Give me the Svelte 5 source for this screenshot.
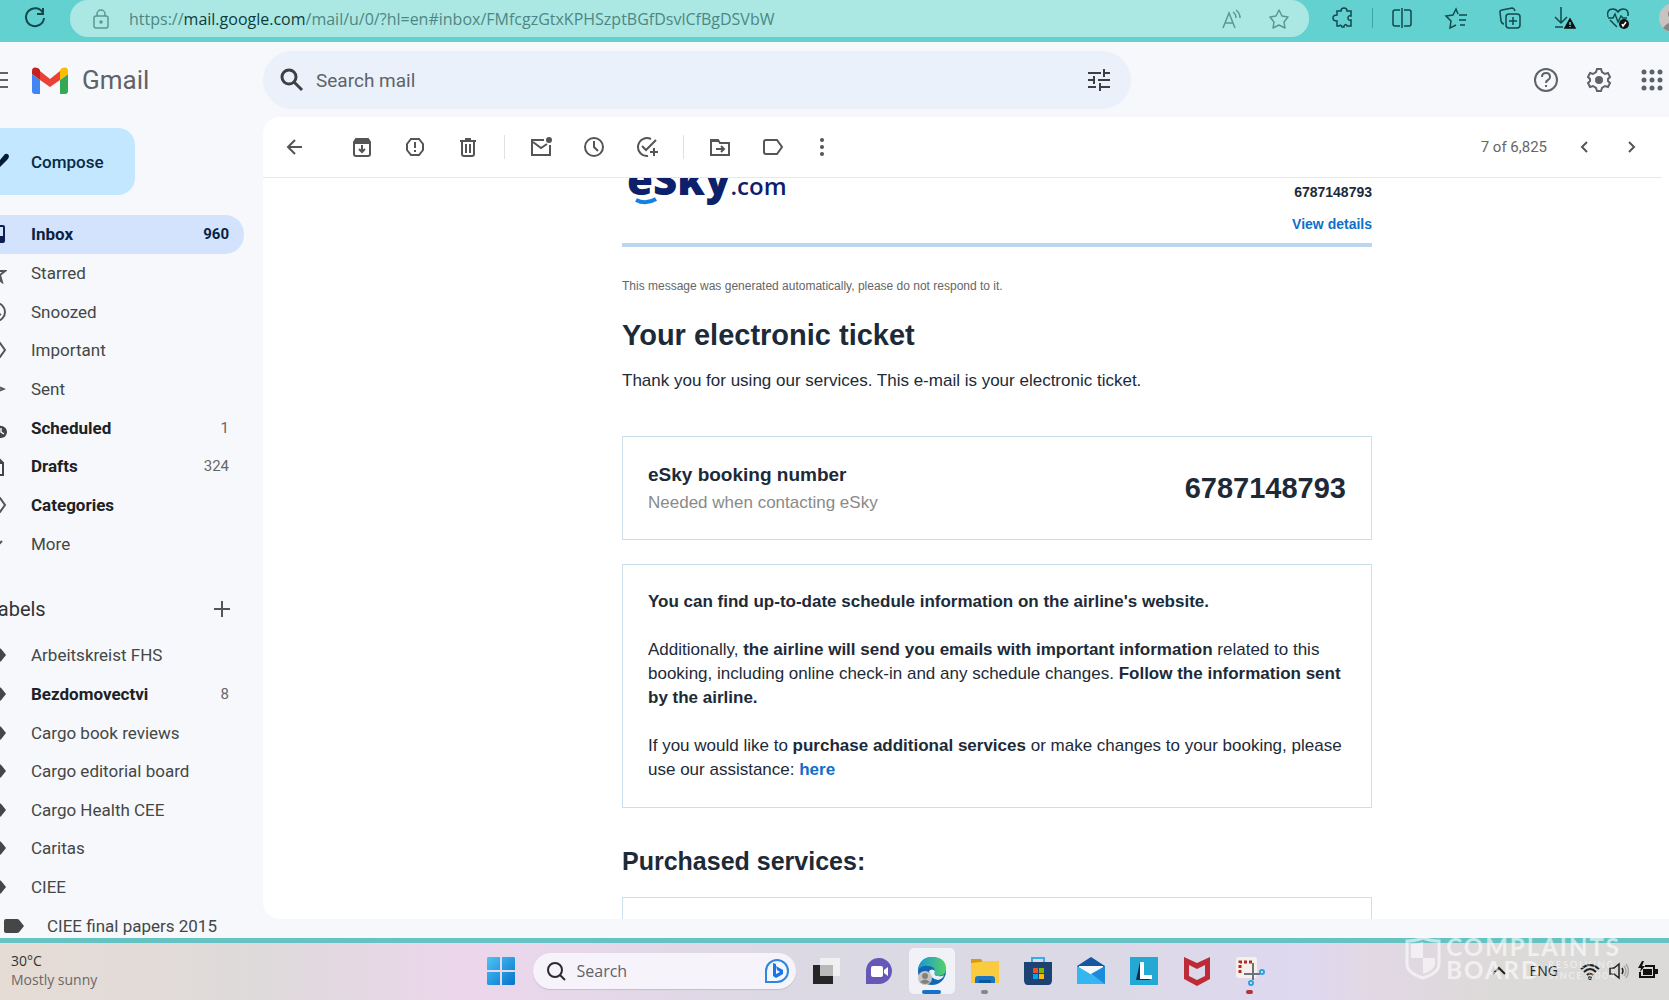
<script lang="ts">
	type Row = { name: string; icon?: string; count?: string; bold?: boolean; active?: boolean; nested?: boolean };

	const folders: Row[] = [
		{ name: 'Inbox', icon: 'inbox', count: '960', bold: true, active: true },
		{ name: 'Starred', icon: 'star' },
		{ name: 'Snoozed', icon: 'clock' },
		{ name: 'Important', icon: 'important' },
		{ name: 'Sent', icon: 'sent' },
		{ name: 'Scheduled', icon: 'scheduled', count: '1', bold: true },
		{ name: 'Drafts', icon: 'draft', count: '324', bold: true },
		{ name: 'Categories', icon: 'important', bold: true },
		{ name: 'More', icon: 'more' }
	];

	const labels: Row[] = [
		{ name: 'Arbeitskreist FHS' },
		{ name: 'Bezdomovectvi', count: '8', bold: true },
		{ name: 'Cargo book reviews' },
		{ name: 'Cargo editorial board' },
		{ name: 'Cargo Health CEE' },
		{ name: 'Caritas' },
		{ name: 'CIEE' },
		{ name: 'CIEE final papers 2015', nested: true }
	];

	let url = $state('/mail/u/0/?hl=en#inbox/FMfcgzGtxKPHSzptBGfDsvlCfBgDSVbW');
	let query = $state('');
	let taskQuery = $state('');
</script>

{#snippet rowIcon(name: string)}
	<svg class="row-icon" viewBox="0 0 22 22" aria-hidden="true">
		{#if name === 'inbox'}
			<path fill="#0b1f52" fill-rule="evenodd" d="M4 2h14q2 0 2 2v14q0 2-2 2H4q-2 0-2-2V4q0-2 2-2zm0 2v9h4c1 3 5 3 6 0h4V4z" />
		{:else if name === 'star'}
			<path fill="none" stroke="#555" stroke-width="2" d="m11 3 2 6h7l-5 4 2 7-6-4-6 4 2-7-5-4h7z" />
		{:else if name === 'clock'}
			<circle cx="11" cy="11" r="9" fill="none" stroke="#555" stroke-width="2" />
			<path fill="none" stroke="#555" stroke-width="2" d="M11 5v6l5 3" />
		{:else if name === 'important'}
			<path fill="none" stroke="#555" stroke-width="2" d="M2 4h13l5 7-5 7H2l4-7z" />
		{:else if name === 'sent'}
			<path fill="#555" fill-rule="evenodd" d="m1 3 20 8-20 8zm2 3v3l7 2-7 2v3l13-5z" />
		{:else if name === 'scheduled'}
			<path fill="none" stroke="#555" stroke-width="2" d="m2 4 16 7M2 4v14l8-3M2 11h7" />
			<circle cx="16" cy="15" r="6" fill="#444" />
			<path fill="none" stroke="#f6f8fc" stroke-width="1.5" d="M16 11v4l3 2" />
		{:else if name === 'draft'}
			<path fill="none" stroke="#444" stroke-width="2" d="M3 2h9l6 6v12H3zM12 2v6h6" />
		{:else if name === 'more'}
			<path fill="none" stroke="#555" stroke-width="2" d="m5 8 6 6 6-6" />
		{:else}
			<path fill="#444746" d="M3 4h11q2 0 3 2l4 5-4 5q-1 2-3 2H3q-2 0-2-2V6q0-2 2-2z" />
		{/if}
	</svg>
{/snippet}

{#snippet row(item: Row)}
	<a class="row" class:active={item.active} class:bold={item.bold} class:nested={item.nested} href="#{item.name}">
		{@render rowIcon(item.icon ?? 'label')}
		<span class="row-name">{item.name}</span>
		{#if item.count}<span class="count">{item.count}</span>{/if}
	</a>
{/snippet}

<div class="screen">
	<div class="browser-bar">
		<button class="reload" aria-label="Reload">
			<svg width="24" height="24" viewBox="0 0 24 24" fill="none" stroke="#12494c" stroke-width="2">
				<path d="M20 7A9 9 0 1 0 21 12M20 2v6h-6" />
			</svg>
		</button>
		<div class="address">
			<svg width="18" height="20" viewBox="0 0 18 20" fill="none" stroke="#5f9490" stroke-width="1.5">
				<rect x="2" y="7" width="14" height="12" rx="2" />
				<path d="M5 7V5a4 4 0 0 1 8 0v2" />
				<circle cx="9" cy="13" r="1" fill="#5f9490" />
			</svg>
			<span class="url"><span>https://</span><b>mail.google.com</b><input aria-label="Address" bind:value={url} /></span>
			<svg width="22" height="22" viewBox="0 0 22 22" fill="none" stroke="#5f9490" stroke-width="1.5">
				<path d="M3 20 9 5l6 15M5 15h8M13 4q3 2 3 6M16 2q4 3 4 8" />
			</svg>
			<svg width="22" height="22" viewBox="0 0 22 22" fill="none" stroke="#5f9490" stroke-width="1.5" stroke-linejoin="round">
				<path d="m11 2 3 6 6 1-4 5 1 6-6-3-6 3 1-6-4-5 6-1z" />
			</svg>
		</div>
		<div class="browser-tools">
			<button aria-label="Extensions">
				<svg viewBox="0 0 24 24"><path d="M6 5h4q0-3 3-3t3 3h4v5q-3-1-3 2t3 2v6h-4q-1-3-3 0v1h-2q-1-3-3-1H6v-5q-4 0-4-3t4-3z" /></svg>
			</button>
			<span class="bar-line"></span>
			<button aria-label="Split screen">
				<svg viewBox="0 0 24 24"><path d="M10 4H5q-2 0-2 2v12q0 2 2 2h5M14 4h5q2 0 2 2v12q0 2-2 2h-5M12 2v20" /></svg>
			</button>
			<button aria-label="Favorites">
				<svg viewBox="0 0 24 24"><path d="M14 8 12 3 9 9l-7 1 5 5-1 7 6-3M15 9h8M15 14h7M16 19h5" /></svg>
			</button>
			<button aria-label="Collections">
				<svg viewBox="0 0 24 24"><path d="M6 18q-2 0-3-3L2 6q0-2 2-2l10-2q2 0 3 3" /><rect x="8" y="8" width="14" height="14" rx="3" /><path d="M15 11v8M11 15h8" /></svg>
			</button>
			<button aria-label="Downloads">
				<svg viewBox="0 0 24 24"><path d="M9 1v16M3 11l6 6 6-6M3 21h8" /><path fill="#111" stroke="#111" d="m18 13 5 9H13z" /><path stroke="#62d1d0" d="M18 16v3M18 20v1" /></svg>
			</button>
			<button aria-label="Browser essentials">
				<svg viewBox="0 0 24 24"><path d="M2 11Q0 3 7 3q3 0 5 3 2-3 5-3 6 0 5 7M2 12h5l2-4 3 8 3-6 2 2h4M4 14l7 7" /><circle cx="18" cy="18" r="5" fill="#111" stroke="none" /><path stroke="#fff" d="m16 18 1 2 3-4" /></svg>
			</button>
		</div>
		<svg class="avatar" viewBox="0 0 30 30" aria-hidden="true">
			<circle cx="15" cy="15" r="15" fill="#c9c3c0" />
			<circle cx="15" cy="11" r="6" fill="#8b8584" />
			<path fill="#8b8584" d="M4 25q11-13 22 0-11 9-22 0z" />
		</svg>
	</div>

	<div class="mail">
		<header class="mail-head">
			<div class="brand">
				<svg width="8" height="18" viewBox="0 0 8 18" stroke="#5f6368" stroke-width="2"><path d="M0 2h8M0 9h8M0 16h8" /></svg>
				<svg class="gmail-mark" viewBox="0 0 36 27" aria-hidden="true">
					<path fill="#4285f4" d="M0 7v17q0 3 3 3h5V13z" />
					<path fill="#34a853" d="M36 7v17q0 3-3 3h-5V13z" />
					<path fill="#ea4335" d="m8 4 10 8 10-8v9l-10 7-10-7z" />
					<path fill="#c5221f" d="M0 4q0-5 6-3l2 2v10L0 7z" />
					<path fill="#fbbc04" d="M36 4q0-5-6-3l-2 2v10l8-6z" />
				</svg>
				<span class="gmail-name">Gmail</span>
			</div>
			<label class="search">
				<svg width="24" height="24" viewBox="0 0 24 24" fill="none" stroke="#3c4043" stroke-width="3"><circle cx="9" cy="9" r="7" /><path d="m14 14 8 8" /></svg>
				<input type="text" placeholder="Search mail" aria-label="Search mail" bind:value={query} />
				<svg width="24" height="24" viewBox="0 0 24 24" fill="none" stroke="#3c4043" stroke-width="2"><path d="M1 5h13M17 5h6M1 12h6M11 12h12M1 19h8M13 19h10M17 1v8M7 8v8M13 15v8" /></svg>
			</label>
			<div class="head-tools">
				<button aria-label="Support">
					<svg width="26" height="26" viewBox="0 0 26 26" fill="none" stroke="#5f6368" stroke-width="2"><circle cx="13" cy="13" r="11" /><path d="M9 10q0-4 4-4t4 4q0 2-2 3t-2 3M13 18v2" /></svg>
				</button>
				<button aria-label="Settings">
					<svg width="26" height="26" viewBox="0 0 26 26" fill="none" stroke="#5f6368" stroke-width="2"><path d="M11 2h4l1 3 3 2 3-1 2 4-2 2v2l2 2-2 4-3-1-3 2-1 3h-4l-1-3-3-2-3 1-2-4 2-2v-2l-2-2 2-4 3 1 3-2z" /><circle cx="13" cy="13" r="3" fill="#5f6368" /></svg>
				</button>
				<button aria-label="Google apps">
					<svg width="26" height="26" viewBox="0 0 26 26" fill="#5f6368">
						{#each [5, 13, 21] as cy}{#each [5, 13, 21] as cx}<circle {cx} {cy} r="2.5" />{/each}{/each}
					</svg>
				</button>
			</div>
		</header>

		<aside>
			<button class="compose">
				<svg width="9" height="20" viewBox="0 0 9 20"><path fill="#001d35" d="M0 8 5 2q3-1 4 2 0 2-2 4l-7 7z" /></svg>
				Compose
			</button>
			<nav class="rows folders">
				{#each folders as item}{@render row(item)}{/each}
			</nav>
			<div class="labels-head">
				<h2>Labels</h2>
				<button aria-label="Create new label">
					<svg width="16" height="16" viewBox="0 0 16 16" stroke="#555" stroke-width="2"><path d="M8 0v16M0 8h16" /></svg>
				</button>
			</div>
			<nav class="rows labels">
				{#each labels as item}{@render row(item)}{/each}
			</nav>
		</aside>

		<main>
			<div class="toolbar">
				<button class="back" aria-label="Back to inbox"><svg viewBox="0 0 22 22"><path d="M18 11H4M11 4l-7 7 7 7" /></svg></button>
				<button aria-label="Archive"><svg viewBox="0 0 22 22"><path d="M3 6v12q0 2 2 2h12q2 0 2-2V6l-2-3H5zM3 7h16M3 5h16M11 9v6M8 13l3 3 3-3" /></svg></button>
				<button aria-label="Report spam"><svg viewBox="0 0 22 22"><path d="M7 3h8l4 5v6l-4 5H7l-4-5V8zM11 6v6M11 14v2" /></svg></button>
				<button aria-label="Delete"><svg viewBox="0 0 22 22"><path d="M5 5v13q0 2 2 2h8q2 0 2-2V5M3 5h16M8 3h6M9 8v9M13 8v9" /></svg></button>
				<span class="split"></span>
				<button aria-label="Mark as unread"><svg viewBox="0 0 22 22"><path d="M14 4H2v15h18V9M3 6l8 6 6-4" /><circle cx="19" cy="4" r="2" fill="#555" /></svg></button>
				<button aria-label="Snooze"><svg viewBox="0 0 22 22"><circle cx="11" cy="11" r="9" /><path d="M11 5v6l4 4" /></svg></button>
				<button aria-label="Add to tasks"><svg viewBox="0 0 22 22"><path d="M15 3A9 9 0 1 0 12 20M6 10l4 4L20 4M18 12v8M14 16h8" /></svg></button>
				<span class="split"></span>
				<button aria-label="Move to"><svg viewBox="0 0 22 22"><path d="M2 4h7l2 3h9v12H2zM2 5h7M7 13h8M12 10l3 3-3 3" /></svg></button>
				<button aria-label="Labels"><svg viewBox="0 0 22 22"><path d="M4 4h11l5 7-5 7H4q-2 0-2-2V6q0-2 2-2z" /></svg></button>
				<button class="kebab" aria-label="More"><svg viewBox="0 0 22 22"><g fill="#555" stroke="none"><circle cx="11" cy="4" r="2" /><circle cx="11" cy="11" r="2" /><circle cx="11" cy="18" r="2" /></g></svg></button>
				<div class="pager">
					<span>7 of 6,825</span>
					<button aria-label="Newer"><svg viewBox="0 0 22 22"><path d="m14 6-5 5 5 5" /></svg></button>
					<button aria-label="Older"><svg viewBox="0 0 22 22"><path d="m8 6 5 5-5 5" /></svg></button>
				</div>
			</div>

			<div class="reader">
				<article>
					<div class="letterhead">
						<div class="esky">
							<span class="esky-name">eSky</span><span class="esky-tld">.com</span>
							<svg class="smile" viewBox="0 0 22 8" aria-hidden="true"><path fill="none" stroke="#1480e0" stroke-width="4" d="M1 3q10 5 20-1" /></svg>
						</div>
						<div class="reference">
							<strong>6787148793</strong>
							<a href="#details">View details</a>
						</div>
					</div>
					<p class="auto-note">This message was generated automatically, please do not respond to it.</p>
					<h1>Your electronic ticket</h1>
					<p class="thanks">Thank you for using our services. This e-mail is your electronic ticket.</p>

					<section class="card booking">
						<div>
							<h3>eSky booking number</h3>
							<p>Needed when contacting eSky</p>
						</div>
						<strong>6787148793</strong>
					</section>

					<section class="card info">
						<p><b>You can find up-to-date schedule information on the airline's website.</b></p>
						<p>Additionally, <b>the airline will send you emails with important information</b> related to this booking, including online check-in and any schedule changes. <b>Follow the information sent by the airline.</b></p>
						<p>If you would like to <b>purchase additional services</b> or make changes to your booking, please use our assistance: <a href="#assistance">here</a></p>
					</section>

					<h2>Purchased services:</h2>
					<section class="card services"></section>
				</article>
			</div>
		</main>
	</div>

	<footer class="taskbar">
		<div class="weather">
			<span>30°C</span>
			<span class="sky">Mostly sunny</span>
		</div>
		<div class="apps">
			<button aria-label="Start">
				<svg viewBox="0 0 30 30">
					<defs><linearGradient id="win" x2="1" y2="1"><stop stop-color="#4cc4f4" /><stop offset="1" stop-color="#0673cc" /></linearGradient></defs>
					<path fill="url(#win)" d="M2 1h12v13H1V2zM16 1h12l1 1v12H16zM1 16h13v13H2l-1-1zM16 16h13v12l-1 1H16z" />
				</svg>
			</button>
			<label class="task-search">
				<svg width="20" height="20" viewBox="0 0 20 20" fill="none" stroke="#2b2b2b" stroke-width="2"><circle cx="9" cy="9" r="7" /><path d="m14 14 5 5" /></svg>
				<input type="text" placeholder="Search" aria-label="Search" bind:value={taskQuery} />
				<svg width="26" height="26" viewBox="0 0 26 26">
					<path fill="#f2f8fe" stroke="#2f86dc" stroke-width="2" d="M2 24V13A11 11 0 1 1 13 24z" />
					<path fill="#1e74e4" d="m9 5 3 1v10l4-2-3-2-1-4 7 4v4l-7 4-3-2z" />
				</svg>
			</label>
			<button aria-label="Task view">
				<svg viewBox="0 0 30 30"><path fill="#262626" d="M2 9h20v19H2z" /><path fill="#f3f3f3" fill-opacity=".85" d="M9 2h20v18H9z" /><path fill="#b9b9b9" d="M9 9h13v11H9z" /></svg>
			</button>
			<button aria-label="Chat">
				<svg viewBox="0 0 30 30"><path fill="#6558b8" d="M2 28V14A13 13 0 1 1 15 28z" /><rect x="7" y="10" width="12" height="11" rx="2" fill="#fff" /><path fill="#fff" d="m20 14 4-3v9l-4-3z" /></svg>
			</button>
			<button class="open" aria-label="Microsoft Edge">
				<svg viewBox="0 0 30 30">
					<defs><linearGradient id="edge" x2="1" y2="0"><stop stop-color="#1697d6" /><stop offset="1" stop-color="#55d267" /></linearGradient></defs>
					<circle cx="15" cy="15" r="14" fill="#1266b4" />
					<path fill="url(#edge)" d="M1 14Q3 1 15 1q14 0 14 12 0 7-8 7-5-1-3-4 0-6-7-6Q5 9 1 14z" />
					<path fill="#e9f3fa" d="M12 15q3-3 6 0-2 5 3 5 4 1 6-1-1 4-6 5-8-1-9-9z" />
					<circle cx="8" cy="22" r="7" fill="#c8c5c3" /><circle cx="8" cy="20" r="3" fill="#858080" /><path fill="#858080" d="M3 26q5-5 10 0-5 4-10 0z" />
				</svg>
				<i class="mark wide"></i>
			</button>
			<button aria-label="File Explorer">
				<svg viewBox="0 0 30 30"><path fill="#d99a10" d="M1 3h10l2 3v5H1z" /><path fill="#fbcb3f" d="M1 7l10-1 2-1h16v22H1z" /><path fill="#1976c4" d="M8 20h14q3 0 3 3v4H5v-4q0-3 3-3z" /><path fill="#0e579b" d="M9 24h12v3H9z" /></svg>
				<i class="mark"></i>
			</button>
			<button aria-label="Microsoft Store">
				<svg viewBox="0 0 30 30"><path fill="none" stroke="#35aee6" stroke-width="2" d="M9 7V2h12v5" /><path fill="#1c4374" d="M1 6h28v18q0 5-4 5H5q-4 0-4-5z" /><path fill="#f25022" d="M10 12h5v5h-5z" /><path fill="#7fba00" d="M16 12h5v5h-5z" /><path fill="#00a4ef" d="M10 18h5v5h-5z" /><path fill="#ffb900" d="M16 18h5v5h-5z" /></svg>
			</button>
			<button aria-label="Mail">
				<svg viewBox="0 0 30 30"><path fill="#1457a0" d="M1 10 15 1l14 9v5H1z" /><path fill="#f4f8fc" d="M3 10h24v8H3z" /><path fill="#35b6f1" d="m1 10 20 12 8-12v18H1z" /><path fill="#1b8bdc" d="M29 10v18L15 18z" /></svg>
			</button>
			<button aria-label="Lingea">
				<svg viewBox="0 0 30 30"><path fill="#23a9d4" d="M1 1h28v28H1z" /><path fill="#0c2f50" d="M11 6v13l11 5H7z" /><path fill="#fff" d="M11 6h4v13h8v4H11z" /></svg>
			</button>
			<button aria-label="McAfee">
				<svg viewBox="0 0 30 30"><path fill="#bd2c36" fill-rule="evenodd" d="m2 1 13 6 13-6v22l-13 7-13-7zm5 8v11l8 4 8-4V9l-8 4z" /></svg>
			</button>
			<button aria-label="Snipping Tool">
				<svg viewBox="0 0 30 30"><rect x="1" y="1" width="21" height="21" rx="3" fill="#f5f0ea" /><path fill="none" stroke="#b02a2a" stroke-width="3" stroke-dasharray="3 2" d="M5 17V6h12" /><path fill="none" stroke="#6d7378" stroke-width="2" d="M18 7v17M9 18h16" /><g fill="#e4f3fb" stroke="#2f9fe0" stroke-width="2"><circle cx="27" cy="16" r="2" /><circle cx="16" cy="27" r="2" /></g></svg>
				<i class="mark red"></i>
			</button>
		</div>
		<div class="tray">
			<svg width="14" height="20" viewBox="0 0 14 20" fill="none" stroke="#222" stroke-width="2"><path d="m1 13 6-6 6 6" /></svg>
			<span>ENG</span>
			<svg width="20" height="20" viewBox="0 0 20 20" fill="none" stroke="#222" stroke-width="2"><path d="M1 8q9-8 18 0M4 11q6-6 12 0M7 14q3-3 6 0" /><circle cx="10" cy="17" r="1" fill="#222" /></svg>
			<svg width="20" height="20" viewBox="0 0 20 20" fill="none" stroke="#222" stroke-width="1.5"><path d="M1 7h4l5-4v14l-5-4H1zM13 7q2 3 0 6" /><path stroke="#aaa" d="M15 5q4 5 0 10M17 3q5 7 0 14" /></svg>
			<svg width="20" height="20" viewBox="0 0 20 20"><path fill="none" stroke="#111" stroke-width="2" d="M7 5h9v11H2v-5" /><path fill="#111" d="M5 8h9v6H5zM17 8h3v5h-3zM4 0 0 7h3l-1 4 5-6H4l2-5z" /></svg>
		</div>
	</footer>

	<div class="watermark">
		<svg width="36" height="44" viewBox="0 0 36 44">
			<path fill="none" stroke="#fff" stroke-width="3" d="M2 5q9 0 16-3 7 3 16 3v23q0 9-16 14Q2 37 2 28z" />
			<path fill="#fff" d="M6 8q6 0 12-2v16H6zM18 22h12v7q-2 6-12 9z" />
		</svg>
		<div class="watermark-text">
			<span class="wm-big">COMPLAINTS</span>
			<span class="wm-line"><span class="wm-big">BOARD</span><span class="wm-small">RESOLVING<br />SINCE 2004</span></span>
		</div>
	</div>
</div>

<style>
	:global(body) {
		margin: 0;
	}

	.screen {
		position: relative;
		display: flex;
		flex-direction: column;
		height: 100vh;
		overflow: hidden;
		background: #f6f8fc;
		color: #444746;
		font-family: Roboto, "Liberation Sans", sans-serif;
	}

	button {
		display: flex;
		align-items: center;
		justify-content: center;
		padding: 0;
		border: none;
		background: none;
		font: inherit;
		color: inherit;
		cursor: pointer;
	}

	input {
		border: none;
		outline: none;
		padding: 0;
		background: none;
		font: inherit;
		color: inherit;
		min-width: 0;
	}

	a {
		text-decoration: none;
		color: inherit;
	}

	h1, h2, h3, p {
		margin: 0;
	}

	svg {
		flex: none;
	}

	/* browser */
	.browser-bar {
		display: flex;
		height: 42px;
		flex: none;
		background: #62d1d0;
		overflow: hidden;
	}

	.reload {
		width: 70px;
		height: 36px;
	}

	.address {
		flex: 1;
		display: flex;
		align-items: center;
		gap: 26px;
		height: 37px;
		padding: 0 19px 0 22px;
		border-radius: 18px;
		background: #abe8e4;
		font: 16px "Open Sans", "Noto Sans", sans-serif;
		color: #4f8683;
		box-sizing: border-box;
	}

	.address svg:first-child {
		margin-right: -7px;
	}

	.url {
		flex: 1;
		display: flex;
	}

	.url b {
		font-weight: 400;
		color: #0e3b3c;
	}

	.url input {
		flex: 1;
	}

	.browser-tools {
		display: flex;
		align-items: center;
		gap: 30px;
		height: 36px;
		padding: 0 29px 0 22px;
	}

	.browser-tools svg {
		width: 24px;
		height: 24px;
		fill: none;
		stroke: #12494c;
		stroke-width: 1.5;
	}

	.bar-line {
		width: 1px;
		height: 20px;
		margin: 0 -13px;
		background: #3ea3a3;
	}

	.avatar {
		width: 30px;
		height: 30px;
		margin: 3px -20px 0 0;
	}

	/* gmail */
	.mail {
		flex: 1;
		min-height: 0;
		display: grid;
		grid-template-columns: 263px 1fr;
		grid-template-rows: 75px 1fr;
		border-bottom: 5px solid #66c3c3;
	}

	.mail-head {
		grid-column: 1 / 3;
		display: flex;
		align-items: center;
		padding-top: 1px;
	}

	.brand {
		width: 263px;
		display: flex;
		align-items: center;
	}

	.gmail-mark {
		width: 36px;
		height: 27px;
		margin: 0 14px 0 24px;
	}

	.gmail-name {
		font-size: 26px;
		color: #5f6368;
	}

	.search {
		width: 52%;
		display: flex;
		align-items: center;
		gap: 12px;
		height: 58px;
		padding: 0 20px 0 17px;
		border-radius: 29px;
		background: #eaf1fb;
		box-sizing: border-box;
	}

	.search input {
		flex: 1;
		font-size: 19px;
	}

	.search input::placeholder, .task-search input::placeholder {
		color: #5f6368;
		opacity: 1;
	}

	.head-tools {
		display: flex;
		gap: 27px;
		margin-left: auto;
		padding-right: 4px;
	}

	aside {
		padding-top: 11px;
		font-size: 17px;
		min-height: 0;
		overflow: hidden;
	}

	.compose {
		width: 135px;
		height: 67px;
		justify-content: flex-start;
		gap: 22px;
		border-radius: 0 17px 17px 0;
		background: #c2e7ff;
		font-weight: 500;
		color: #0b2a44;
	}

	.rows {
		display: grid;
		grid-auto-rows: 1fr;
		margin-right: 19px;
	}

	.folders {
		height: 348px;
		margin-top: 20px;
	}

	.labels {
		height: 309px;
	}

	.row {
		display: flex;
		align-items: center;
		padding-right: 15px;
		border-radius: 0 19px 19px 0;
	}

	.row-icon {
		width: 22px;
		height: 22px;
		margin: 0 24px 0 -15px;
	}

	.row-name {
		flex: 1;
	}

	.nested .row-icon {
		margin: 0 22px 0 3px;
	}

	.count {
		font-size: 15px;
		font-weight: 400;
		color: #666;
	}

	.bold {
		font-weight: 700;
		color: #202124;
	}

	.active {
		background: #d3e3fd;
		color: #0b1f44;
	}

	.active .count {
		font-weight: 700;
		color: #0b1f44;
	}

	.labels-head {
		display: flex;
		align-items: center;
		justify-content: space-between;
		height: 73px;
		padding-top: 19px;
		margin: 0 33px 0 -13px;
		box-sizing: border-box;
	}

	.labels-head h2 {
		font-size: 20px;
		font-weight: 400;
		color: #333;
	}

	main {
		display: flex;
		flex-direction: column;
		min-width: 0;
		min-height: 0;
		margin-bottom: 19px;
		border-radius: 17px 0 0 17px;
		background: #fff;
		overflow: hidden;
	}

	.toolbar {
		display: flex;
		align-items: center;
		gap: 31px;
		height: 61px;
		flex: none;
		padding: 0 19px 0 21px;
		margin-right: 7px;
		border-bottom: 1px solid #e6e8eb;
		box-sizing: border-box;
	}

	.toolbar svg {
		width: 22px;
		height: 22px;
		fill: none;
		stroke: #555;
		stroke-width: 2;
	}

	.toolbar .back {
		margin-right: 14px;
	}

	.split {
		width: 1px;
		height: 24px;
		margin: 0 -6px;
		background: #dfe1e3;
	}

	.kebab {
		margin-left: -4px;
	}

	.pager {
		display: flex;
		align-items: center;
		gap: 26px;
		margin-left: auto;
		font-size: 15px;
		color: #666;
	}

	/* message */
	.reader {
		flex: 1;
		min-height: 0;
		display: flex;
		justify-content: center;
		padding-left: 62px;
		overflow: hidden;
		font-family: "Liberation Sans", Arial, sans-serif;
		color: #1d2a38;
	}

	article {
		width: 750px;
	}

	.letterhead {
		display: flex;
		justify-content: space-between;
		height: 65px;
		border-bottom: 4px solid #bcd5f0;
	}

	.esky {
		position: relative;
		padding-left: 5px;
		margin-top: -26px;
		font-family: "Open Sans", "Noto Sans", sans-serif;
		line-height: 54px;
		color: #0c2169;
		white-space: nowrap;
	}

	.esky-name {
		font-size: 42px;
		font-weight: 800;
	}

	.esky-tld {
		font-size: 24px;
		font-weight: 600;
	}

	.smile {
		position: absolute;
		left: 13px;
		top: 45px;
		width: 22px;
		height: 8px;
	}

	.reference {
		display: flex;
		flex-direction: column;
		align-items: flex-end;
		font-size: 14px;
		font-weight: 700;
		line-height: 32px;
		margin-top: -2px;
	}

	.reader a {
		color: #0f6fc9;
		font-weight: 700;
	}

	.auto-note {
		margin-top: 29px;
		font-size: 12px;
		line-height: 20px;
		color: #666;
	}

	h1 {
		margin-top: 19px;
		font-size: 29px;
		line-height: 40px;
	}

	.thanks {
		margin-top: 14px;
		font-size: 17px;
		line-height: 24px;
	}

	.card {
		border: 1px solid #cbdfec;
		padding: 25px;
	}

	.booking {
		display: flex;
		justify-content: space-between;
		align-items: center;
		margin-top: 43px;
		height: 52px;
	}

	.booking h3 {
		font-size: 19px;
		line-height: 28px;
	}

	.booking p {
		font-size: 17px;
		line-height: 27px;
		color: #8a8a8a;
	}

	.booking > strong {
		font-size: 29px;
	}

	.info {
		display: flex;
		flex-direction: column;
		gap: 24px;
		margin-top: 24px;
		font-size: 17px;
		line-height: 24px;
	}

	article h2 {
		margin-top: 37px;
		font-size: 25px;
		line-height: 32px;
	}

	.services {
		margin-top: 20px;
		height: 80px;
	}

	/* taskbar */
	.taskbar {
		flex: none;
		display: grid;
		grid-template-columns: 1fr auto 1fr;
		align-items: center;
		height: 57px;
		padding-bottom: 2px;
		box-sizing: border-box;
		background: linear-gradient(90deg, #e6dcd5 0%, #dedadb 16%, #ecd6ec 28%, #dcd9e4 46%, #dbd9e5 65%, #ded8f0 78%, #e2d8e5 82%, #dcdad8 90%, #dbdad8 100%);
		font-family: "Open Sans", "Noto Sans", sans-serif;
	}

	.weather {
		display: flex;
		flex-direction: column;
		padding: 0 0 1px 11px;
		font-size: 14px;
		line-height: 19px;
		color: #333;
	}

	.sky {
		color: #6b6866;
	}

	.apps {
		display: flex;
		align-items: center;
		gap: 7px;
		margin-left: 81px;
	}

	.apps button {
		position: relative;
		width: 46px;
		height: 46px;
		border-radius: 5px;
	}

	.apps button svg {
		width: 30px;
		height: 30px;
	}

	.apps .open {
		background: #f1f2f8;
	}

	.mark {
		position: absolute;
		bottom: 0;
		width: 7px;
		height: 4px;
		border-radius: 2px;
		background: #85858f;
	}

	.wide {
		width: 19px;
		background: #1572c8;
	}

	.red {
		background: #b8323a;
	}

	.task-search {
		display: flex;
		align-items: center;
		gap: 11px;
		width: 263px;
		height: 36px;
		margin-left: 2px;
		padding: 0 6px 0 13px;
		border-radius: 18px;
		background: #f6f3fa;
		box-shadow: 0 1px 1px #c3bfca;
		box-sizing: border-box;
	}

	.task-search input {
		flex: 1;
		font-size: 16px;
	}

	.tray {
		display: flex;
		align-items: center;
		justify-content: flex-end;
		gap: 9px;
		padding-right: 11px;
		font-size: 14px;
		color: #222;
	}

	.tray span {
		margin: 0 13px 0 15px;
	}

	.watermark {
		position: absolute;
		right: 48px;
		bottom: 19px;
		display: flex;
		align-items: center;
		gap: 5px;
		color: #fff;
		font-family: Lato, sans-serif;
		opacity: 0.6;
		pointer-events: none;
	}

	.watermark-text {
		display: flex;
		flex-direction: column;
	}

	.wm-big {
		font-size: 24px;
		line-height: 23px;
		font-weight: 700;
		letter-spacing: 2px;
	}

	.wm-line {
		display: flex;
		align-items: center;
		gap: 7px;
	}

	.wm-small {
		font-size: 9px;
		line-height: 11px;
		letter-spacing: 2px;
	}
</style>
